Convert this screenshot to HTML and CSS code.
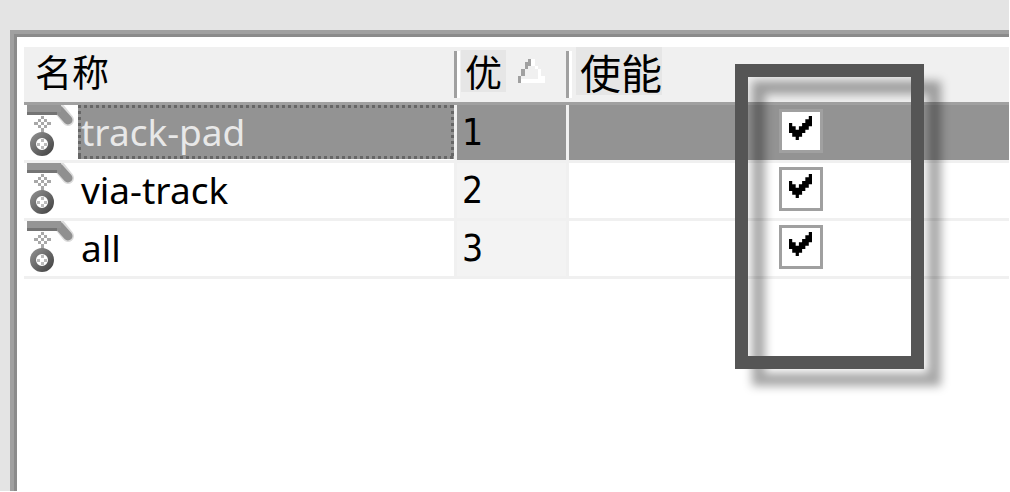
FILE: index.html
```
<!DOCTYPE html>
<html lang="zh-CN">
<head>
    <meta charset="UTF-8">
    <title>规则</title>
    <link rel="stylesheet" href="styles.css">
</head>
<body>

<!-- 规则图标，每行共用 -->
<svg class="icon-defs" aria-hidden="true">
    <defs>
        <linearGradient id="ring" x1="0" y1="0" x2="1" y2="1">
            <stop offset="0" stop-color="#8a8a8a"/>
            <stop offset="1" stop-color="#484848"/>
        </linearGradient>
    </defs>
    <symbol id="rule-icon" viewBox="0 0 47 54">
        <path d="M33 5 L41 15" stroke="#dcdcdc" stroke-width="12" stroke-linecap="round"/>
        <path d="M32 5 L41 15" stroke="#909090" stroke-width="9" stroke-linecap="round"/>
        <path d="M0 0 H34 V7 H0 Z" fill="#959595"/>
        <path d="M0 7 H30 V10 H0 Z" fill="#747474"/>
        <path d="M14 11h3v3h-3z M11 14h3v3h-3z M17 14h3v3h-3z M7 17h4v3h-4z M14 17h3v3h-3z M20 17h4v3h-4z M11 20h3v3h-3z M17 20h3v3h-3z M14 23h3v5h-3z" fill="#a8a8a8"/>
        <circle cx="15" cy="39" r="9" fill="#fff" stroke="url(#ring)" stroke-width="6"/>
        <path d="M14 34h3v3h-3z M10 38h3v3h-3z M17 38h3v3h-3z M14 41h3v3h-3z" fill="#bbb"/>
    </symbol>
</svg>

<div class="panel">
    <table class="rules">
        <colgroup>
            <col class="col-name">
            <col class="col-priority">
            <col class="col-enabled">
        </colgroup>
        <thead>
            <tr>
                <th>名称</th>
                <th class="divided">
                    <div class="sort-head">
                        <span class="mark">优</span>
                        <svg class="sort-arrow" viewBox="0 0 27 24" shape-rendering="crispEdges" aria-hidden="true">
                            <path d="M13 0h4v7h3v3h3v7h4v7h-24v-4h17v-10h-3v-3h-4z" fill="#fff"/>
                            <path d="M10 0h3v7h-3v3h-3v7h-4v7h-3v-7h3v-7h4v-7h3z" fill="#a0a0a0"/>
                        </svg>
                    </div>
                </th>
                <th class="divided"><span class="mark mark-large">使能</span></th>
            </tr>
        </thead>
        <tbody>
            <tr class="selected">
                <td class="name">
                    <div class="name-cell">
                        <svg class="rule-icon" aria-hidden="true"><use href="#rule-icon"/></svg>
                        <label class="rule-name" for="enable-1">track-pad</label>
                    </div>
                </td>
                <td class="priority">1</td>
                <td class="enabled"><input class="check" id="enable-1" type="checkbox" checked></td>
            </tr>
            <tr>
                <td class="name">
                    <div class="name-cell">
                        <svg class="rule-icon" aria-hidden="true"><use href="#rule-icon"/></svg>
                        <label class="rule-name" for="enable-2">via-track</label>
                    </div>
                </td>
                <td class="priority">2</td>
                <td class="enabled"><input class="check" id="enable-2" type="checkbox" checked></td>
            </tr>
            <tr>
                <td class="name">
                    <div class="name-cell">
                        <svg class="rule-icon" aria-hidden="true"><use href="#rule-icon"/></svg>
                        <label class="rule-name" for="enable-3">all</label>
                    </div>
                </td>
                <td class="priority">3</td>
                <td class="enabled"><input class="check" id="enable-3" type="checkbox" checked></td>
            </tr>
        </tbody>
    </table>
    <div class="highlight"></div>
</div>

</body>
</html>
```
FILE: styles.css
```
* {
    box-sizing: border-box;
}
html {
    height: 100%;
    background: #fff;
}
body {
    display: flex;
    flex-direction: column;
    height: 100%;
    margin: 0;
    padding: 30px 0 0 10px;
    border: solid #fff;
    border-width: 0 1px 1px 0;
    background: #e4e4e4;
    overflow: hidden;
    font-family: "Noto Sans", "Noto Sans CJK SC", sans-serif;
    font-size: 37px;
    color: #000;
}
.icon-defs {
    position: absolute;
    width: 0;
    height: 0;
}
.panel {
    position: relative;
    flex: 1;
    padding: 13px 0 0 10px;
    border: solid #a0a0a0;
    border-width: 4px 0 0 4px;
    box-shadow: inset 3px 3px #8b8b8b;
    background: #fff;
}
.rules {
    width: 100%;
    table-layout: fixed;
    border-collapse: separate;
    border-spacing: 0;
}
.col-name {
    width: 433px;
}
.col-priority {
    width: 112px;
}

/* 表头 */
.rules th {
    height: 58px;
    padding: 0 0 7px 11px;
    border-bottom: 3px solid #a0a0a0;
    background: #f0f0f0;
    font-family: "Noto Sans CJK SC", sans-serif;
    font-weight: 400;
    line-height: 48px;
    text-align: left;
}
.rules th.divided {
    padding-left: 4px;
}
.divided {
    position: relative;
}
/* 列分隔线 */
.divided::before {
    content: "";
    position: absolute;
    left: -3px;
    top: 4px;
    bottom: 4px;
    width: 6px;
    background: linear-gradient(to right, #a0a0a0 50%, #fff 50%);
}
.sort-head {
    display: flex;
    align-items: center;
    gap: 12px;
}
.mark {
    display: inline-block;
    padding: 0 4px;
    background: #e6e6e6;
    line-height: 42px;
}
.mark-large {
    margin-left: 3px;
    padding-right: 0;
    font-size: 41px;
    line-height: 48px;
    vertical-align: top;
}
.sort-arrow {
    width: 27px;
    height: 24px;
}

/* 表体 */
.rules td {
    height: 58px;
    padding: 0;
    border-bottom: 3px solid #f0f0f0;
    line-height: 54px;
    vertical-align: top;
}
.rules .name,
.rules .priority {
    border-right: 3px solid #f0f0f0;
}
.name-cell {
    display: flex;
    padding-left: 3px;
}
.rule-icon {
    width: 47px;
    height: 54px;
    margin-right: 4px;
}
.rule-name {
    flex: 1;
    padding-left: 3px;
}
.rules .priority {
    padding-left: 5px;
    background: #f3f3f3;
    font-family: "DejaVu Sans Condensed", "DejaVu Sans", sans-serif;
    line-height: 55px;
}
.rules .enabled {
    padding: 4px 0 0 210px;
    line-height: 0;
}

/* 选中行 */
.selected .priority,
.selected .enabled {
    background: #939393;
}
.selected .rule-name {
    color: #e8e8e8;
    background:
        repeating-linear-gradient(to right, #666 0 3px, transparent 3px 6px) top / 100% 3px no-repeat,
        repeating-linear-gradient(to right, #666 0 3px, transparent 3px 6px) bottom / 100% 3px no-repeat,
        repeating-linear-gradient(to bottom, #666 0 3px, transparent 3px 6px) left / 3px 100% no-repeat,
        repeating-linear-gradient(to bottom, #666 0 3px, transparent 3px 6px) right / 3px 100% no-repeat,
        #939393;
}
.rules .selected td {
    background-clip: padding-box;
}

.check {
    appearance: none;
    position: relative;
    z-index: 2;
    width: 44px;
    height: 44px;
    margin: 0;
    padding: 4px 7px;
    border: 3px solid #a0a0a0;
    background: #fff;
}
.check:checked::before {
    content: "";
    display: block;
    width: 23px;
    height: 24px;
    background: #000;
    clip-path: polygon(86% 0, 100% 0, 100% 43%, 86% 43%, 86% 57%, 71% 57%, 71% 71%, 57% 71%, 57% 86%, 43% 86%, 43% 100%, 29% 100%, 29% 86%, 14% 86%, 14% 71%, 0 71%, 0 29%, 14% 29%, 14% 43%, 29% 43%, 29% 57%, 43% 57%, 43% 43%, 57% 43%, 57% 29%, 71% 29%, 71% 14%, 86% 14%);
}

/* 标注框 */
.highlight {
    position: absolute;
    z-index: 1;
    top: 30px;
    left: 721px;
    width: 189px;
    height: 305px;
    border: 13px solid #555;
    filter: drop-shadow(17px 17px 5px rgba(0, 0, 0, 0.35));
    pointer-events: none;
}
```
